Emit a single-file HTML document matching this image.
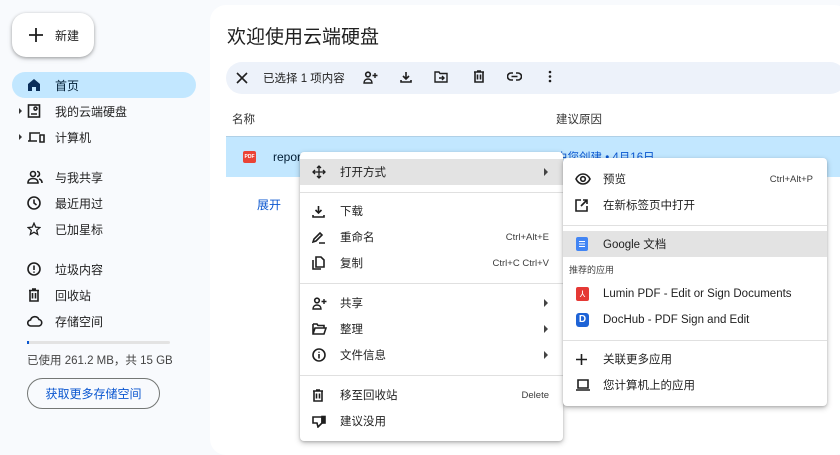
<!DOCTYPE html>
<html><head><meta charset="utf-8">
<style>
*{box-sizing:border-box;margin:0;padding:0}
body{width:840px;height:450px;overflow:hidden;background:#f8fafd;font-family:"Liberation Sans","Noto Sans CJK SC",sans-serif;color:#1f1f1f;position:relative}
.abs{position:absolute}
.newbtn{left:12px;top:13px;width:82px;height:44px;background:#fff;border-radius:14px;box-shadow:0 1px 3px rgba(0,0,0,.3),0 2px 6px rgba(0,0,0,.12);font-size:12px;display:flex;align-items:center}
.nav{left:12px;width:184px;height:26px;border-radius:13px;font-size:12px;display:flex;align-items:center}
.nav svg{position:absolute;left:15px}
.nav span{position:absolute;left:43px}
.main{left:210px;top:5px;width:640px;height:450px;background:#fff;border-radius:16px}
.menu{background:#fff;border-radius:4px;box-shadow:0 2px 6px rgba(0,0,0,.25),0 1px 2px rgba(0,0,0,.15)}
.mi{position:absolute;left:0;right:0;height:26px;font-size:11.5px;display:flex;align-items:center}
.mi svg{position:absolute;left:12px}
.mi .t{position:absolute;left:40px}
.mi .k{position:absolute;right:14px;font-size:9.5px;color:#3c3c3c}
.mi .a{position:absolute;right:15px;width:0;height:0;border-top:4px solid transparent;border-bottom:4px solid transparent;border-left:4px solid #444}
.sep{position:absolute;left:0;right:0;height:1px;background:#e0e0e0}
svg{fill:none;stroke:#1f1f1f;stroke-width:1.6}
</style></head><body>
<div class="abs newbtn"><svg width="16" height="16" style="position:absolute;left:16px" viewBox="0 0 16 16"><path d="M8 1v14M1 8h14" stroke-width="1.8"/></svg><span style="position:absolute;left:43px">新建</span></div>

<div class="abs nav" style="top:72px;background:#c2e7ff"><svg width="14" height="14" viewBox="0 0 14 14"><path d="M1 6L7 1l6 5v7H9V9H5v4H1z" fill="#0b2e5a" stroke="none"/></svg><span style="color:#001d35">首页</span></div>
<div class="abs nav" style="top:98px"><div class="abs" style="left:7px;border-top:3px solid transparent;border-bottom:3px solid transparent;border-left:3px solid #333"></div><svg width="14" height="14" viewBox="0 0 14 14"><rect x="1.5" y="1" width="11" height="12"/><path d="M4 10h6M7 4.5a1.5 1.5 0 1 1 0 .1"/></svg><span>我的云端硬盘</span></div>
<div class="abs nav" style="top:124px"><div class="abs" style="left:7px;border-top:3px solid transparent;border-bottom:3px solid transparent;border-left:3px solid #333"></div><svg width="18" height="14" viewBox="0 0 18 14"><path d="M3 11V3h10M1 11h9M13 5h4v7h-4z"/></svg><span>计算机</span></div>
<div class="abs nav" style="top:164px"><svg width="16" height="14" viewBox="0 0 16 14"><circle cx="6" cy="4" r="2.5"/><path d="M1 13c0-3 2-4.5 5-4.5s5 1.5 5 4.5zM10 1.5a2.5 2.5 0 0 1 0 5M12 9c2 .5 3 2 3 4"/></svg><span>与我共享</span></div>
<div class="abs nav" style="top:190px"><svg width="14" height="14" viewBox="0 0 14 14"><circle cx="7" cy="7" r="6"/><path d="M7 3.5V7l2.5 2"/></svg><span>最近用过</span></div>
<div class="abs nav" style="top:216px"><svg width="14" height="14" viewBox="0 0 14 14"><path d="M7 1.2l1.7 3.9 4.2.4-3.2 2.8 1 4.1L7 10.2 3.3 12.4l1-4.1L1.1 5.5l4.2-.4z" stroke-width="1.3"/></svg><span>已加星标</span></div>
<div class="abs nav" style="top:256px"><svg width="14" height="14" viewBox="0 0 14 14"><circle cx="7" cy="7" r="6"/><path d="M7 3.5v4.5M7 9.5v1.2"/></svg><span>垃圾内容</span></div>
<div class="abs nav" style="top:282px"><svg width="14" height="14" viewBox="0 0 14 14"><path d="M2 2.5h10M3 2.5V13h8V2.5M5.5 5v5.5M8.5 5v5.5M5 1h4"/></svg><span>回收站</span></div>
<div class="abs nav" style="top:308px"><svg width="16" height="14" viewBox="0 0 16 14"><path d="M4 12a3 3 0 0 1-.5-6 4.5 4.5 0 0 1 8.5-.5 3.3 3.3 0 0 1 0 6.5z"/></svg><span>存储空间</span></div>
<div class="abs" style="left:27px;top:341px;width:143px;height:3px;background:#e3e3e3;border-radius:2px"><div style="width:2px;height:3px;background:#0b57d0"></div></div>
<div class="abs" style="left:27px;top:352px;font-size:11.5px;color:#444">已使用 261.2 MB，共 15 GB</div>
<div class="abs" style="left:27px;top:378px;width:133px;height:31px;border:1px solid #747775;border-radius:16px;font-size:12px;color:#0b57d0;display:flex;align-items:center;justify-content:center">获取更多存储空间</div>

<div class="abs main"></div>
<div class="abs" style="left:227px;top:22px;font-size:19px">欢迎使用云端硬盘</div>
<div class="abs" style="left:226px;top:62px;width:620px;height:32px;background:#edf2fa;border-radius:16px"></div>
<svg class="abs" style="left:236px;top:72px" width="12" height="12" viewBox="0 0 12 12"><path d="M1 1l10 10M11 1L1 11"/></svg>
<div class="abs" style="left:263px;top:70px;font-size:11.5px">已选择 1 项内容</div>
<svg class="abs" style="left:363px;top:71px" width="15" height="13" viewBox="0 0 15 13"><circle cx="5" cy="3.5" r="2.3"/><path d="M1 12c0-2.5 1.5-4 4-4s4 1.5 4 4zM12 2v5M9.5 4.5h5" stroke-width="1.4"/></svg>
<svg class="abs" style="left:400px;top:71px" width="12" height="12" viewBox="0 0 12 12"><path d="M6 1v7M3 5l3 3 3-3M1 9v2h10V9"/></svg>
<svg class="abs" style="left:434px;top:71px" width="14" height="12" viewBox="0 0 14 12"><path d="M1 1h4l1 1.5h7V11H1zM5 7h5M8 5l2 2-2 2" stroke-width="1.4"/></svg>
<svg class="abs" style="left:473px;top:70px" width="12" height="13" viewBox="0 0 12 13"><path d="M1 2h10M2 2v10h8V2M4.5 4.5v5M7.5 4.5v5M4 1h4"/></svg>
<svg class="abs" style="left:507px;top:72px" width="15" height="9" viewBox="0 0 15 9"><path d="M6 1H4a3.5 3.5 0 0 0 0 7h2M9 1h2a3.5 3.5 0 0 1 0 7H9M4.5 4.5h6"/></svg>
<svg class="abs" style="left:548px;top:70px" width="4" height="13" viewBox="0 0 4 13"><circle cx="2" cy="2" r="1.3" fill="#1f1f1f" stroke="none"/><circle cx="2" cy="6.5" r="1.3" fill="#1f1f1f" stroke="none"/><circle cx="2" cy="11" r="1.3" fill="#1f1f1f" stroke="none"/></svg>
<div class="abs" style="left:232px;top:111px;font-size:11.5px;color:#333">名称</div>
<div class="abs" style="left:556px;top:111px;font-size:11.5px;color:#333">建议原因</div>
<div class="abs" style="left:226px;top:136px;width:614px;height:41px;background:#c2e7ff;border-top:1px solid #b0d0e6"></div>
<div class="abs" style="left:243px;top:151px;width:13px;height:12px;background:#ea4335;border-radius:2px;font-size:5px;color:#fff;font-weight:bold;text-align:center;line-height:12px">PDF</div>
<div class="abs" style="left:273px;top:150px;font-size:12px;color:#001d35">report</div>
<div class="abs" style="left:556px;top:149px;font-size:11.5px;color:#0b57d0">由您创建 • 4月16日</div>
<div class="abs" style="left:257px;top:196px;font-size:12px;color:#0b57d0">展开</div>

<div class="abs menu" style="left:300px;top:152px;width:263px;height:289px">
<div class="mi" style="top:7px;background:#e3e3e3"><svg width="14" height="14" viewBox="0 0 14 14"><path d="M7 1v12M1 7h12M5 3l2-2 2 2M5 11l2 2 2-2M3 5L1 7l2 2M11 5l2 2-2 2" stroke-width="1.3"/></svg><span class="t">打开方式</span><span class="a"></span></div>
<div class="sep" style="top:40px"></div>
<div class="mi" style="top:46px"><svg width="13" height="13" viewBox="0 0 13 13"><path d="M6.5 1v7M3.5 5l3 3 3-3M1 10v2h11v-2"/></svg><span class="t">下载</span></div>
<div class="mi" style="top:72px"><svg width="14" height="13" viewBox="0 0 14 13"><path d="M1 11l1-3 6-6 2 2-6 6zM7 12h6"/></svg><span class="t">重命名</span><span class="k">Ctrl+Alt+E</span></div>
<div class="mi" style="top:98px"><svg width="13" height="14" viewBox="0 0 13 14"><path d="M4 1h5l3 3v7H4zM1 4v9h8"/></svg><span class="t">复制</span><span class="k">Ctrl+C Ctrl+V</span></div>
<div class="sep" style="top:131px"></div>
<div class="mi" style="top:138px"><svg width="15" height="13" viewBox="0 0 15 13"><circle cx="5" cy="3.5" r="2.3"/><path d="M1 12c0-2.5 1.5-4 4-4s4 1.5 4 4zM12 2v5M9.5 4.5h5" stroke-width="1.4"/></svg><span class="t">共享</span><span class="a"></span></div>
<div class="mi" style="top:164px"><svg width="15" height="12" viewBox="0 0 15 12"><path d="M1 1h4l1 1.5h6V5M1 1v10h11l2-6H3l-2 6"/></svg><span class="t">整理</span><span class="a"></span></div>
<div class="mi" style="top:190px"><svg width="14" height="14" viewBox="0 0 14 14"><circle cx="7" cy="7" r="6"/><path d="M7 6v4.5M7 3.7v1"/></svg><span class="t">文件信息</span><span class="a"></span></div>
<div class="sep" style="top:223px"></div>
<div class="mi" style="top:230px"><svg width="12" height="13" viewBox="0 0 12 13"><path d="M1 2h10M2 2v10h8V2M4.5 4.5v5M7.5 4.5v5M4 1h4"/></svg><span class="t">移至回收站</span><span class="k">Delete</span></div>
<div class="mi" style="top:256px"><svg width="14" height="13" viewBox="0 0 14 13"><path d="M1 2h9v6l-4 4-1-4H1z"/><rect x="10" y="1.5" width="3" height="6.5" fill="#1f1f1f"/></svg><span class="t">建议没用</span></div>
</div>

<div class="abs menu" style="left:563px;top:158px;width:264px;height:248px">
<div class="mi" style="top:8px"><svg width="16" height="12" viewBox="0 0 16 12"><path d="M1 6c2-4 4.5-5 7-5s5 1 7 5c-2 4-4.5 5-7 5S3 10 1 6z"/><circle cx="8" cy="6" r="2.3"/></svg><span class="t">预览</span><span class="k">Ctrl+Alt+P</span></div>
<div class="mi" style="top:34px"><svg width="13" height="13" viewBox="0 0 13 13"><path d="M6 1H1v11h11V7M8 1h4v4M12 1L6 7"/></svg><span class="t">在新标签页中打开</span></div>
<div class="sep" style="top:67px"></div>
<div class="mi" style="top:73px;background:#e3e3e3"><div class="abs" style="left:13px;top:6px;width:12px;height:14px;background:#4285f4;border-radius:2px"></div><div class="abs" style="left:16px;top:10px;width:6px;height:1px;background:#fff;box-shadow:0 2.5px 0 #fff,0 5px 0 #fff"></div><span class="t">Google 文档</span></div>
<div class="abs" style="left:6px;top:105px;font-size:9px;color:#444">推荐的应用</div>
<div class="mi" style="top:123px"><div class="abs" style="left:13px;top:6px;width:13px;height:14px;background:#e53935;border-radius:2px;color:#fff;font-size:9px;text-align:center;line-height:14px">⅄</div><span class="t">Lumin PDF - Edit or Sign Documents</span></div>
<div class="mi" style="top:149px"><div class="abs" style="left:13px;top:6px;width:13px;height:14px;background:#1e63d6;border-radius:3px;color:#fff;font-size:10px;font-weight:bold;text-align:center;line-height:14px">D</div><span class="t">DocHub - PDF Sign and Edit</span></div>
<div class="sep" style="top:182px"></div>
<div class="mi" style="top:188px"><svg width="13" height="13" viewBox="0 0 13 13"><path d="M6.5 1v11M1 6.5h11"/></svg><span class="t">关联更多应用</span></div>
<div class="mi" style="top:214px"><svg width="16" height="12" viewBox="0 0 16 12"><path d="M3 1h10v8H3zM1 11h14"/></svg><span class="t">您计算机上的应用</span></div>
</div>
</body></html>
